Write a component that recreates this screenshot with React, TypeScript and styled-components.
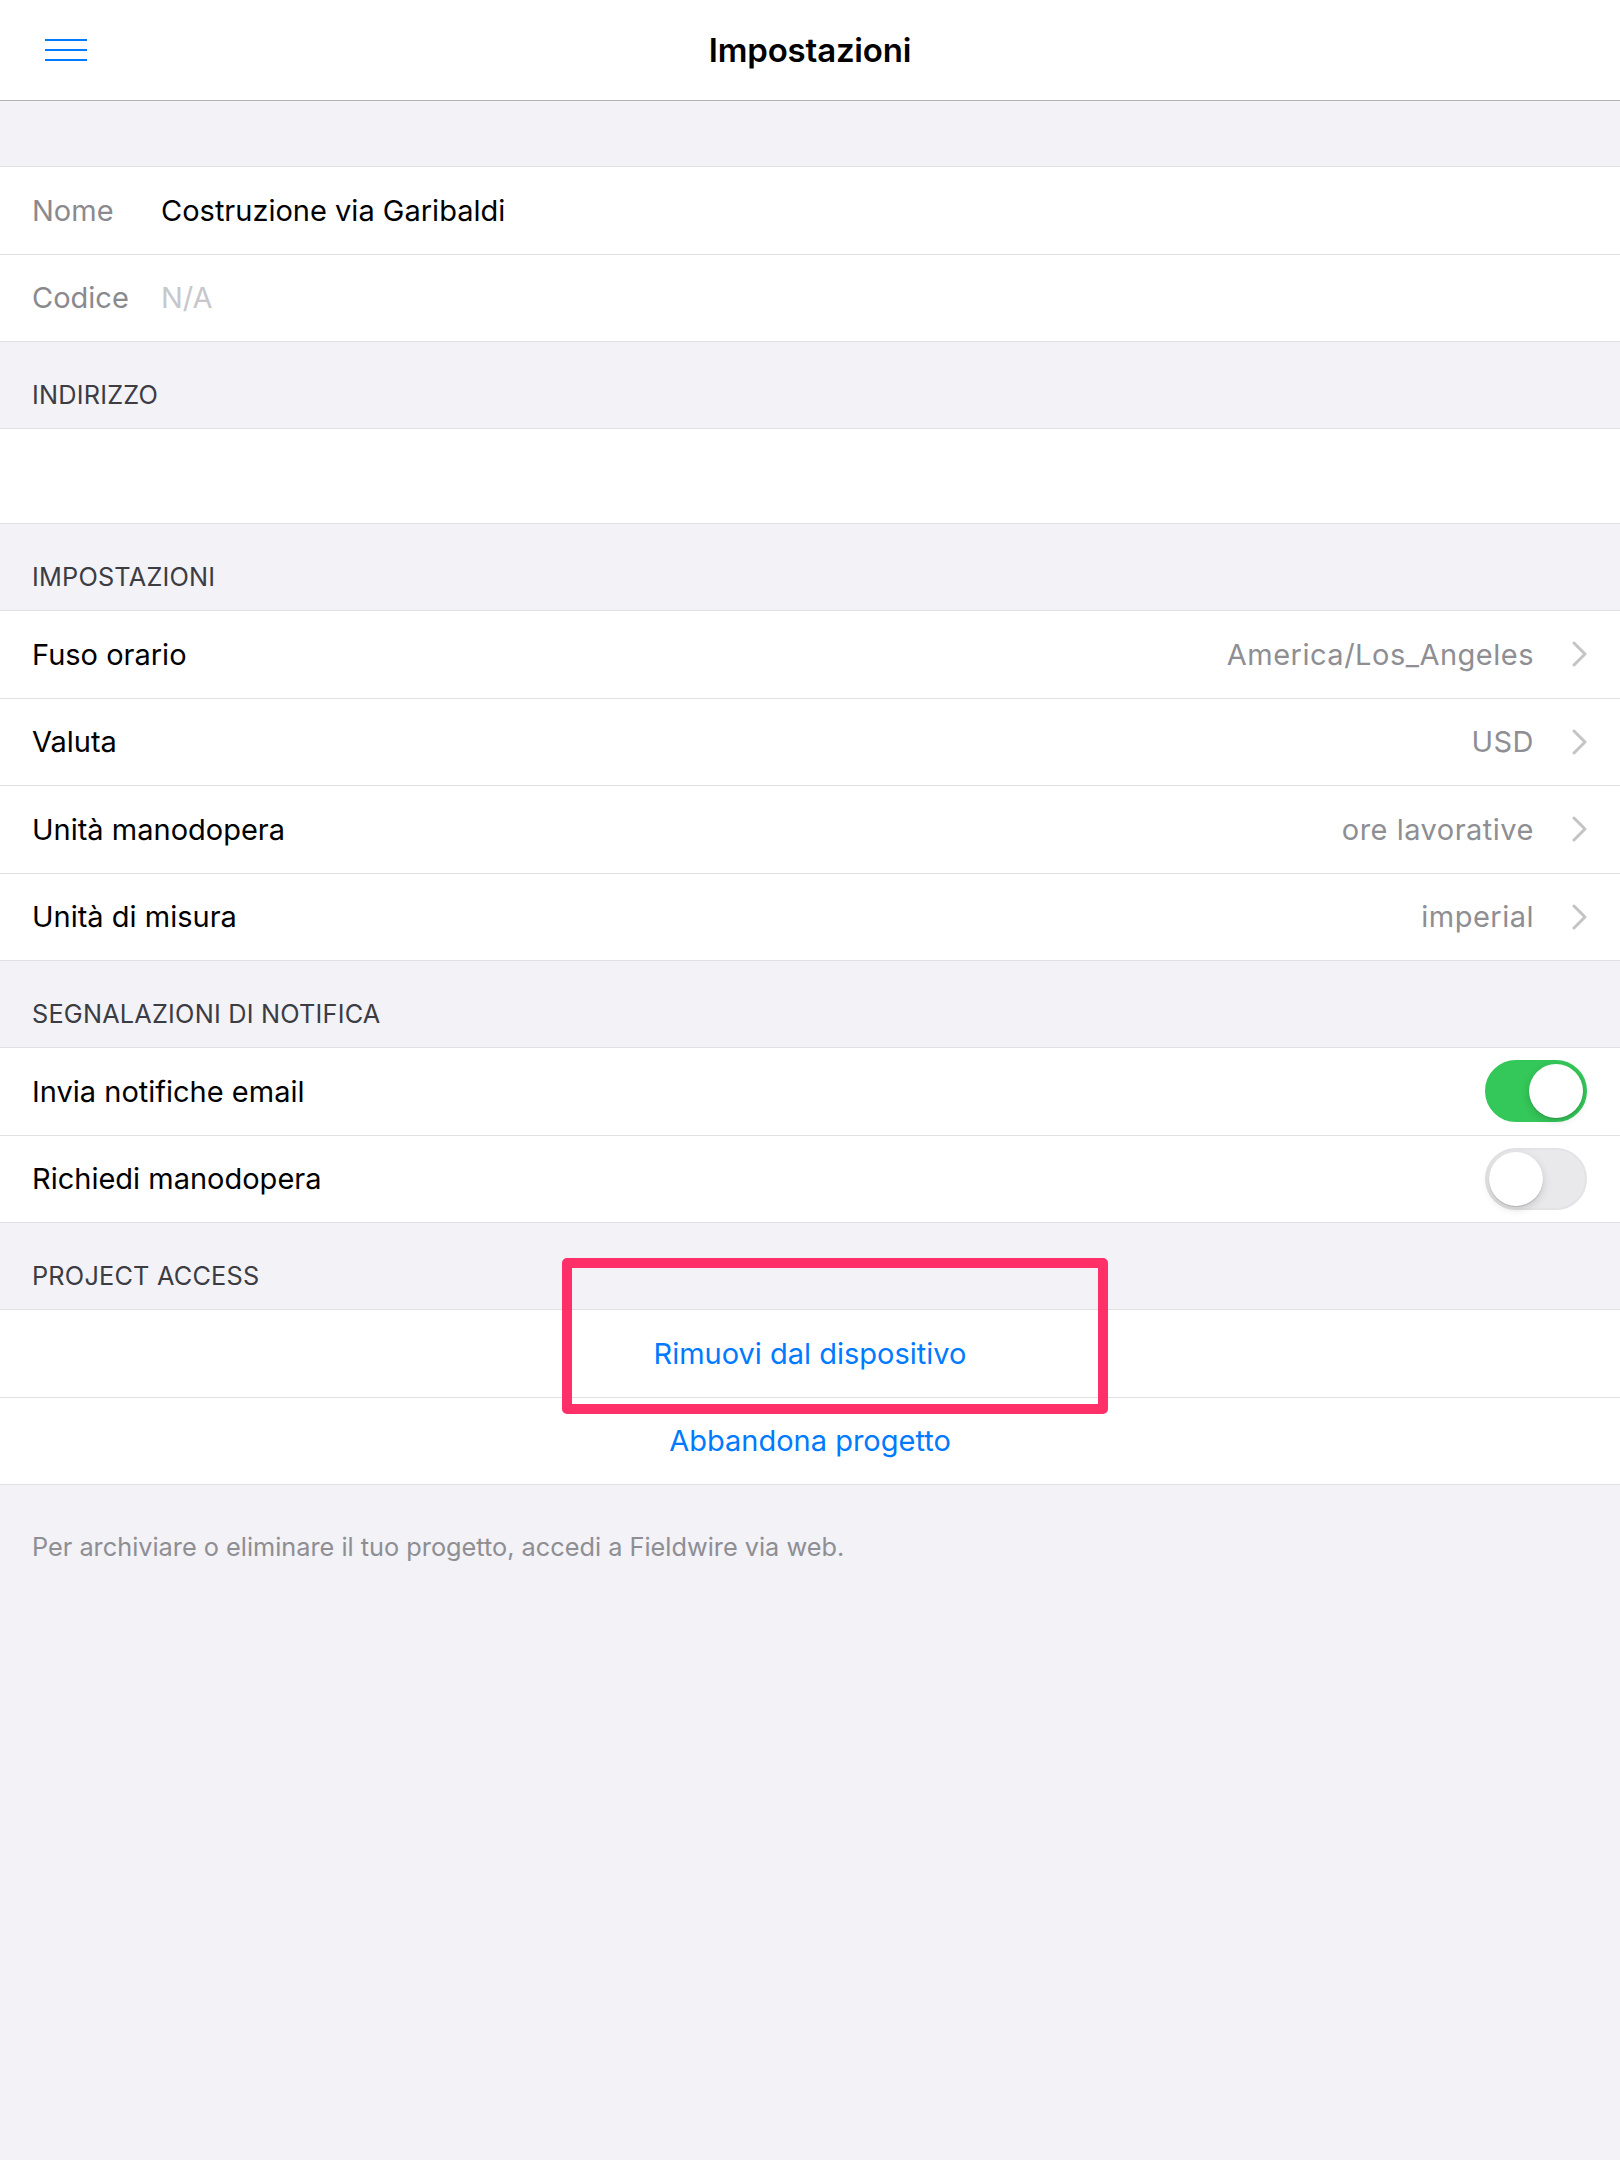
import styled, { createGlobalStyle } from 'styled-components';

const GlobalStyle = createGlobalStyle`
  html, body {
    margin: 0;
    padding: 0;
    background: #f2f2f7;
  }
  body {
    font-family: Inter, "Noto Sans", "Liberation Sans", sans-serif;
    -webkit-font-smoothing: antialiased;
  }
`;

const Page = styled.div`
  min-height: 2160px;
  background: #f2f2f7;
`;

const NavBar = styled.header`
  height: 100px;
  background: #ffffff;
  border-bottom: 1px solid #b1b1b6;
  display: grid;
  grid-template-columns: 1fr auto 1fr;
  align-items: center;
  padding: 0 45px;
`;

const MenuButton = styled.button`
  justify-self: start;
  background: none;
  border: 0;
  padding: 0;
  width: 42px;
  height: 24px;
  display: flex;
  cursor: pointer;
`;

const Title = styled.h1`
  margin: 0;
  font-size: 33px;
  font-weight: 600;
  color: #000;
  letter-spacing: -0.2px;
`;

const TopGap = styled.div`
  height: 65px;
`;

const Group = styled.div`
  background: #ffffff;
  border-top: 1px solid #e1e1e5;
  border-bottom: 1px solid #e1e1e5;
`;

const Row = styled.div<{ $tall?: boolean }>`
  height: ${(p) => (p.$tall ? '94px' : '86.5px')};
  padding-left: 32px;
  display: flex;
  align-items: center;
  & + & {
    border-top: 1px solid #e1e1e5;
  }
`;

const RowInner = styled.div<{ $center?: boolean }>`
  flex: 1;
  height: 100%;
  display: flex;
  align-items: center;
  justify-content: ${(p) => (p.$center ? 'center' : 'flex-start')};
  padding-right: ${(p) => (p.$center ? '0' : '33px')};
  margin-left: ${(p) => (p.$center ? '-32px' : '0')};
`;

const FieldLabel = styled.span`
  width: 129px;
  font-size: 29px;
  color: #8a8a8e;
`;

const FieldValue = styled.span<{ $placeholder?: boolean }>`
  font-size: 29px;
  color: ${(p) => (p.$placeholder ? '#c7c7cc' : '#000')};
`;

const RowTitle = styled.span`
  flex: 1;
  font-size: 29px;
  color: #000;
`;

const Detail = styled.span`
  font-size: 29px;
  color: #8e8e93;
  margin-right: 38px;
  letter-spacing: 0.5px;
`;

const ActionText = styled.span`
  font-size: 29px;
  color: #007aff;
`;

const SectionHeader = styled.div`
  height: 86px;
  box-sizing: border-box;
  padding: 0 32px 18px;
  display: flex;
  align-items: flex-end;
  font-size: 25.3px;
  color: #3c3c43;
  text-transform: uppercase;
  letter-spacing: 0.2px;
`;

const Footer = styled.p`
  margin: 0;
  padding: 46px 32px 0;
  font-size: 25.3px;
  color: #8e8e93;
`;

const Track = styled.div<{ $on: boolean }>`
  width: 102px;
  height: 62px;
  box-sizing: border-box;
  border-radius: 31px;
  position: relative;
  background: ${(p) => (p.$on ? '#34c759' : '#e9e9eb')};
  border: 2px solid ${(p) => (p.$on ? '#34c759' : '#e3e3e6')};
`;

const Knob = styled.div<{ $on: boolean }>`
  position: absolute;
  top: 2px;
  left: ${(p) => (p.$on ? '42px' : '2px')};
  width: 54px;
  height: 54px;
  border-radius: 50%;
  background: #ffffff;
  box-shadow: 0 3px 8px rgba(0, 0, 0, 0.15), 0 1px 1px rgba(0, 0, 0, 0.16);
`;

const AccessSection = styled.div`
  position: relative;
`;

const Highlight = styled.div`
  position: absolute;
  left: 562px;
  top: 35px;
  width: 546px;
  height: 156px;
  box-sizing: border-box;
  border: 10px solid #ff3068;
  border-radius: 5px;
  pointer-events: none;
`;

const Chevron = () => (
  <svg width="15" height="26" viewBox="0 0 15 26" fill="none">
    <path d="M2 2l11 11L2 24" stroke="#c4c4c7" strokeWidth="3" strokeLinecap="round" strokeLinejoin="round" />
  </svg>
);

const Hamburger = () => (
  <svg width="42" height="24" viewBox="0 0 42 24">
    <g stroke="#007aff" strokeWidth="2.2">
      <line x1="0" y1="2" x2="42" y2="2" />
      <line x1="0" y1="12" x2="42" y2="12" />
      <line x1="0" y1="22" x2="42" y2="22" />
    </g>
  </svg>
);

const Switch = ({ on }: { on: boolean }) => (
  <Track $on={on}>
    <Knob $on={on} />
  </Track>
);

const settings = [
  { title: 'Fuso orario', value: 'America/Los_Angeles' },
  { title: 'Valuta', value: 'USD' },
  { title: 'Unità manodopera', value: 'ore lavorative' },
  { title: 'Unità di misura', value: 'imperial' },
];

const notifications = [
  { title: 'Invia notifiche email', on: true },
  { title: 'Richiedi manodopera', on: false },
];

export default function App() {
  return (
    <Page>
      <GlobalStyle />
      <NavBar>
        <MenuButton aria-label="Menu">
          <Hamburger />
        </MenuButton>
        <Title>Impostazioni</Title>
        <span />
      </NavBar>

      <TopGap />
      <Group>
        <Row>
          <RowInner>
            <FieldLabel>Nome</FieldLabel>
            <FieldValue>Costruzione via Garibaldi</FieldValue>
          </RowInner>
        </Row>
        <Row>
          <RowInner>
            <FieldLabel>Codice</FieldLabel>
            <FieldValue $placeholder>N/A</FieldValue>
          </RowInner>
        </Row>
      </Group>

      <SectionHeader>Indirizzo</SectionHeader>
      <Group>
        <Row $tall />
      </Group>

      <SectionHeader>Impostazioni</SectionHeader>
      <Group>
        {settings.map((s) => (
          <Row key={s.title}>
            <RowInner>
              <RowTitle>{s.title}</RowTitle>
              <Detail>{s.value}</Detail>
              <Chevron />
            </RowInner>
          </Row>
        ))}
      </Group>

      <SectionHeader>Segnalazioni di notifica</SectionHeader>
      <Group>
        {notifications.map((n) => (
          <Row key={n.title}>
            <RowInner>
              <RowTitle>{n.title}</RowTitle>
              <Switch on={n.on} />
            </RowInner>
          </Row>
        ))}
      </Group>

      <AccessSection>
        <SectionHeader>Project access</SectionHeader>
        <Group>
          <Row>
            <RowInner $center>
              <ActionText>Rimuovi dal dispositivo</ActionText>
            </RowInner>
          </Row>
          <Row>
            <RowInner $center>
              <ActionText>Abbandona progetto</ActionText>
            </RowInner>
          </Row>
        </Group>
        <Highlight />
      </AccessSection>

      <Footer>Per archiviare o eliminare il tuo progetto, accedi a Fieldwire via web.</Footer>
    </Page>
  );
}
